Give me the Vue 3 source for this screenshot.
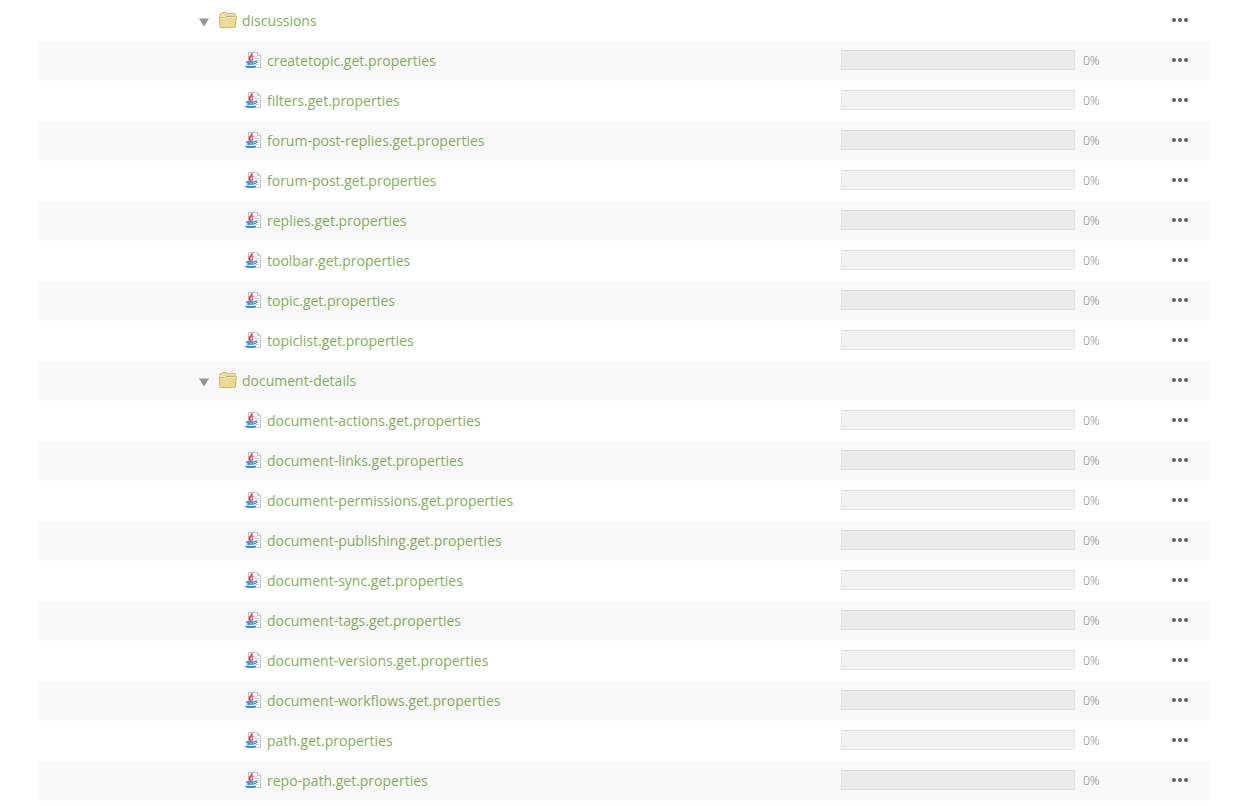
<script setup>
import { reactive, computed } from 'vue'

const folders = reactive([
  {
    name: 'discussions',
    open: true,
    files: ['createtopic', 'filters', 'forum-post-replies', 'forum-post', 'replies', 'toolbar', 'topic', 'topiclist'],
  },
  {
    name: 'document-details',
    open: true,
    files: [
      'document-actions', 'document-links', 'document-permissions', 'document-publishing', 'document-sync',
      'document-tags', 'document-versions', 'document-workflows', 'path', 'repo-path',
    ],
  },
])

const rows = computed(() =>
  folders.flatMap((folder) => [
    { key: folder.name, name: folder.name, folder },
    ...(folder.open
      ? folder.files.map((f) => ({ key: folder.name + '/' + f, name: f + '.get.properties', progress: 0 }))
      : []),
  ])
)
</script>

<template>
  <main class="page">
    <table class="tree">
      <tbody>
        <tr v-for="row in rows" :key="row.key">
          <td class="name">
            <div v-if="row.folder" class="entry folder">
              <button
                class="toggle"
                type="button"
                :aria-expanded="row.folder.open"
                :aria-label="'Toggle ' + row.name"
                @click="row.folder.open = !row.folder.open"
              >
                <svg width="10" height="9" viewBox="0 0 10 9" :class="{ closed: !row.folder.open }">
                  <path d="M0 .5H10L5 8.5Z" fill="#929292" />
                </svg>
              </button>
              <svg class="folder-icon" width="18" height="16" viewBox="0 0 18 16">
                <path d="M1 14V2.5Q1 1.5 2 1.5H2.8L3.6.5H7.2L8 1.5H15.5Q16.5 1.5 16.5 2.5V13L15.5 15.5H2Z" fill="#e2cf8c" stroke="#d2bd78" />
                <path d="M2 5.5V2.5H15.5V5Z" fill="#f5f0d8" />
                <path d="M3 3.5H15" stroke="#e0d8b4" />
                <path d="M.8 14.5V6.3Q.8 5.5 1.6 5.5H5.5L7 4.5H16.6Q17.5 4.5 17.4 5.4L16.3 14.5Q16.2 15.5 15.2 15.5H2Q.8 15.5.8 14.5Z" fill="#ebda96" stroke="#d0b865" />
                <path d="M2 6.5H6L7.4 5.5H16.3" fill="none" stroke="#f4eab8" />
              </svg>
              <a href="#">{{ row.name }}</a>
            </div>
            <div v-else class="entry file">
              <svg class="file-icon" width="16" height="16" viewBox="0 0 16 16">
                <path d="M3.5.5H12.5L15.5 3.5V15.5H3.5Z" fill="#fff" stroke="#c4c4c4" />
                <path d="M12.5.5V3.5H15.5" fill="#eee" stroke="#c4c4c4" />
                <path d="M10 4.5H12M10 6.5H14M10 8.5H14M12 10.5H14M11 12.5H14" stroke="#d2d2d2" />
                <path d="M0 9H3V16H0Z" fill="#fff" fill-opacity=".4" />
                <path d="M7.2 1.2C7.8 3.6 3.6 4.4 4.4 6.8Q4.8 8 6 9.2" fill="none" stroke="#e23c3c" stroke-width="1.8" />
                <path d="M9 4C6.6 5 6.6 5.6 7.3 6.6Q7.8 7.6 6.8 8.9" fill="none" stroke="#e05050" stroke-width="1.1" />
                <path d="M1 10H9.4M2.2 12H8.6" fill="none" stroke="#2486c4" stroke-width="1.7" />
                <path d="M9.2 9.4Q12 8.8 11.4 10.4Q10.8 11.6 8.8 11.9" fill="none" stroke="#2f8dc7" stroke-width="1.1" />
                <path d="M.5 14.4Q5.5 15.8 10.8 14.2" fill="none" stroke="#2486c4" stroke-width="1.7" />
              </svg>
              <a href="#">{{ row.name }}</a>
            </div>
          </td>
          <td class="status">
            <div v-if="!row.folder" class="meter">
              <div class="track" role="progressbar" :aria-label="row.name" :aria-valuenow="row.progress" aria-valuemin="0" aria-valuemax="100">
                <div class="fill" :style="{ width: row.progress + '%' }"></div>
              </div>
              <span class="percent">{{ row.progress }}%</span>
            </div>
          </td>
          <td class="actions">
            <button class="more" type="button" :aria-label="'Actions for ' + row.name">
              <svg width="16" height="4" viewBox="0 0 16 4" fill="#606060">
                <circle cx="2" cy="2" r="2" />
                <circle cx="8" cy="2" r="2" />
                <circle cx="14" cy="2" r="2" />
              </svg>
            </button>
          </td>
        </tr>
      </tbody>
    </table>
  </main>
</template>

<style>
body {
  background: #fff;
}
</style>

<style scoped>
.page {
  padding: 1px 31px 5px 39px;
  font-family: "Open Sans", "Noto Sans", sans-serif;
  font-size: 14px;
  line-height: 20px;
}
.tree {
  width: 100%;
  border-collapse: separate;
  border-spacing: 0;
  table-layout: fixed;
}
td {
  height: 38px;
  padding: 0;
  border-top: 1px solid #fff;
  border-bottom: 1px solid #fff;
  vertical-align: middle;
}
tr:nth-child(even) td {
  background: #f9f9f9;
  border-color: #fcfcfc;
}
.status {
  width: 308px;
}
.actions {
  width: 60px;
}
.entry {
  display: flex;
  align-items: center;
}
.folder {
  padding-left: 160px;
}
.file {
  padding-left: 206px;
}
.toggle,
.more {
  display: flex;
  border: 0;
  padding: 0;
  background: none;
  cursor: pointer;
}
.toggle {
  margin-right: 10px;
  padding-top: 2px;
}
.closed {
  transform: rotate(-90deg);
}
.folder-icon,
.file-icon {
  margin-bottom: 2px;
}
.folder-icon {
  margin-right: 5px;
}
.file-icon {
  margin-right: 6px;
}
a {
  color: #86ab62;
  text-decoration: none;
}
a:hover {
  text-decoration: underline;
}
.meter {
  display: flex;
  align-items: center;
  gap: 8px;
}
.track {
  box-sizing: border-box;
  width: 234px;
  height: 20px;
  margin-bottom: 2px;
  border: 1px solid #e8e8e8;
  border-top-color: #e0e0e0;
  background: #f1f1f1;
}
tr:nth-child(even) .track {
  border-color: #e2e2e2;
  border-top-color: #dadada;
  background: #ebebeb;
}
.fill {
  height: 100%;
  background: #86ab62;
}
.percent {
  color: #808080;
  font-size: 12px;
  font-weight: 300;
}
.more {
  margin: 0 0 2px 23px;
}
</style>
